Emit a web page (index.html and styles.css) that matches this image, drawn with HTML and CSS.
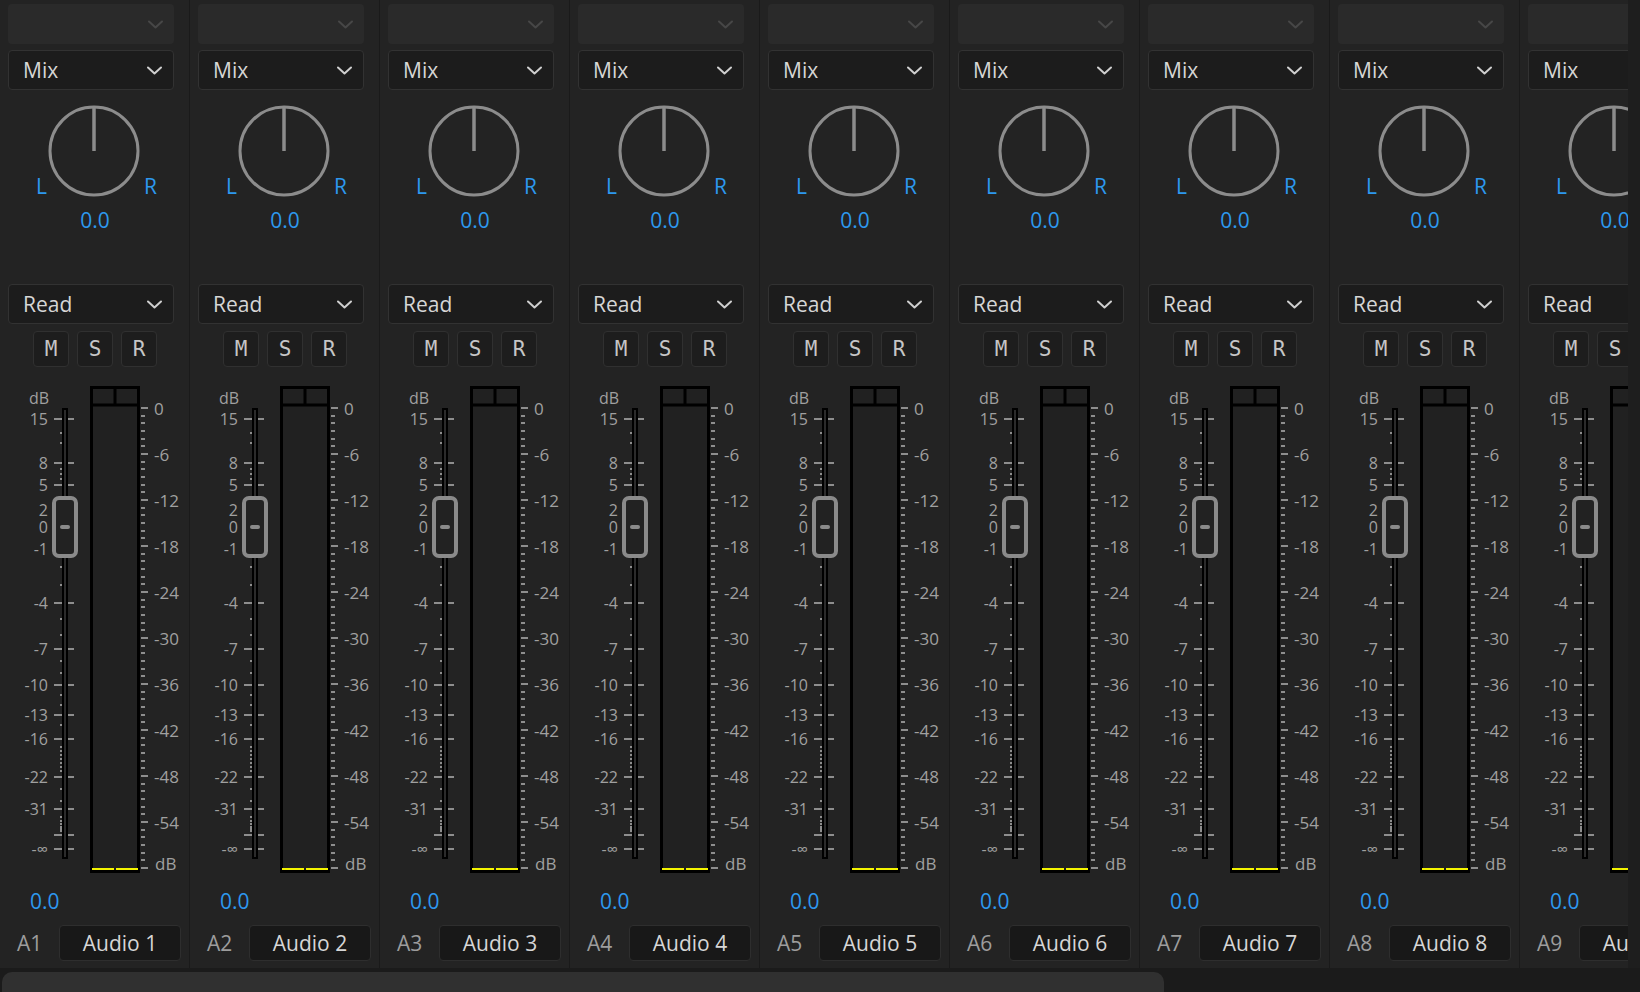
FILE: index.html
```html
<!DOCTYPE html>
<html lang="en">
<head>
<meta charset="utf-8">
<title>Audio Track Mixer</title>
<link rel="stylesheet" href="styles.css">
</head>
<body>
<div class="app">
  <div class="main">
    <div class="mixer" id="mixer"></div>
    <div class="side"></div>
  </div>
  <div class="hscroll"><div class="thumb"></div></div>
</div>
<script src="script.js"></script>
</body>
</html>
```

FILE: styles.css
```css
html, body {
  margin: 0;
  padding: 0;
  background: #232323;
}
body {
  width: 1640px;
  height: 992px;
  overflow: hidden;
  font-family: "Open Sans", "Noto Sans", sans-serif;
  font-weight: 500;
}
.app {
  display: flex;
  flex-direction: column;
  width: 1640px;
  height: 992px;
}
.main {
  display: flex;
  height: 968px;
}
.mixer {
  display: flex;
  width: 1628px;
  flex: 0 0 1628px;
  overflow: hidden;
  background: #232323;
}
.side {
  flex: 1;
  background: #1e1e1e;
}
.hscroll {
  height: 24px;
  box-sizing: border-box;
  padding: 4px 0 0 2px;
  background: #1b1b1b;
  overflow: hidden;
}
.thumb {
  width: 1162px;
  height: 30px;
  background: #303030;
  border-radius: 10px;
}
.ch {
  flex: 0 0 190px;
  width: 190px;
  box-sizing: border-box;
  border-right: 1px solid #1a1a1a;
  padding: 4px 15px 0 8px;
  display: flex;
  flex-direction: column;
}
.dd {
  height: 40px;
  flex: 0 0 40px;
  box-sizing: border-box;
  border-radius: 4px;
  display: flex;
  align-items: center;
  justify-content: space-between;
  padding: 0 11px 0 14px;
  font-size: 21px;
  color: #d6d6d6;
}
.dd svg {
  display: block;
}
.dd-off {
  background: #2a2a2a;
}
.dd-on {
  background: #1c1c1c;
  border: 1px solid #323232;
}
.dd-mix {
  margin-top: 6px;
}
.pan {
  height: 194px;
  flex: 0 0 194px;
}
.pan svg, .fader svg {
  display: block;
}
.lbl-blue {
  fill: #2d98ee;
  font-family: "Open Sans", sans-serif;
  font-weight: 500;
  font-size: 21px;
}
.msr {
  display: flex;
  gap: 8px;
  margin-top: 7px;
  padding-left: 25px;
  height: 36px;
}
.btn {
  width: 36px;
  height: 36px;
  box-sizing: border-box;
  border: 1px solid #303030;
  border-radius: 4px;
  background: #1d1d1d;
  color: #c6c6c6;
  font-family: "DejaVu Sans Mono", monospace;
  font-weight: 400;
  font-size: 21px;
  display: flex;
  align-items: center;
  justify-content: center;
}
.fader {
  margin-top: 13px;
  height: 500px;
  flex: 0 0 500px;
}
.scale-txt {
  fill: #a0a0a0;
  font-family: "Open Sans", sans-serif;
  font-weight: 500;
  font-size: 17px;
}
.scale-sm {
  font-size: 16px;
}
.vol {
  margin-top: 7px;
  height: 28px;
  line-height: 28px;
  padding-left: 22px;
  font-size: 21px;
  color: #2d98ee;
}
.name-row {
  margin-top: 10px;
  display: flex;
  align-items: center;
  height: 36px;
}
.trk {
  flex: 0 0 51px;
  width: 51px;
  box-sizing: border-box;
  padding-left: 9px;
  font-size: 21px;
  color: #9d9d9d;
}
.name {
  width: 122px;
  flex: 0 0 122px;
  height: 36px;
  box-sizing: border-box;
  border: 1px solid #2e2e2e;
  border-radius: 4px;
  background: #181818;
  color: #d6d6d6;
  font-size: 21px;
  display: flex;
  align-items: center;
  justify-content: center;
  white-space: nowrap;
}
```

FILE: script.js
```js
(function () {
  var mixer = document.getElementById('mixer');

  function chevron(color) {
    return '<svg width="15" height="9" viewBox="0 0 15 9"><path d="M1 1.5 L7.5 7.5 L14 1.5" fill="none" stroke="' + color + '" stroke-width="2" stroke-linecap="round" stroke-linejoin="round"/></svg>';
  }

  function panSvg() {
    return '<svg width="166" height="194" viewBox="0 0 166 194">' +
      '<circle cx="86" cy="61" r="44" fill="none" stroke="#8c8c8c" stroke-width="3"/>' +
      '<line x1="86" y1="16" x2="86" y2="61" stroke="#8c8c8c" stroke-width="3.5"/>' +
      '<text class="lbl-blue" x="28" y="104">L</text>' +
      '<text class="lbl-blue" x="136" y="104">R</text>' +
      '<text class="lbl-blue" x="87" y="138" text-anchor="middle">0.0</text>' +
      '</svg>';
  }

  var leftMajor = [
    ['15', 419], ['8', 463], ['5', 485], ['2', 510], ['0', 527], ['-1', 549],
    ['-4', 603], ['-7', 649], ['-10', 685], ['-13', 715], ['-16', 739],
    ['-22', 777], ['-31', 809], ['', 835], ['-\u221E', 849]
  ];
  var leftDots = [433, 443, 469, 474, 479, 567, 585, 619, 635, 661, 673, 695, 705, 725,
    747, 751, 755, 759, 763, 767, 771, 789, 801, 817, 821, 824, 827, 829, 831];

  function faderSvg() {
    var s = '<svg width="182" height="500" viewBox="0 0 182 500">';
    var oy = 380, ox = 8;
    s += '<text class="scale-txt scale-sm" x="' + (49 - ox) + '" y="' + (404 - oy) + '" text-anchor="end">dB</text>';
    leftMajor.forEach(function (m) {
      var y = m[1] - oy;
      s += '<rect x="' + (54 - ox) + '" y="' + (y - 1) + '" width="8" height="2" fill="#8e8e8e"/>';
      s += '<rect x="' + (68 - ox) + '" y="' + (y - 1) + '" width="6" height="2" fill="#8e8e8e"/>';
      if (m[0]) {
        s += '<text class="scale-txt scale-sm" x="' + (48 - ox) + '" y="' + (y + 6) + '" text-anchor="end">' + m[0] + '</text>';
      }
    });
    leftDots.forEach(function (d) {
      s += '<rect x="' + (60 - ox) + '" y="' + (d - oy - 1) + '" width="2" height="2" fill="#8e8e8e"/>';
    });
    s += '<rect x="' + (62 - ox) + '" y="' + (408 - oy) + '" width="6" height="451" fill="#000"/>';
    s += '<rect x="' + (64 - ox) + '" y="' + (410 - oy) + '" width="2" height="447" fill="#2b2b2b"/>';
    s += '<rect x="' + (54 - ox) + '" y="' + (498 - oy) + '" width="22" height="58" rx="5" ry="5" fill="#222" stroke="#8a8a8a" stroke-width="4"/>';
    s += '<rect x="' + (60 - ox) + '" y="' + (525 - oy) + '" width="10" height="4" rx="2" ry="2" fill="#8a8a8a"/>';
    s += '<rect x="' + (91.5 - ox) + '" y="' + (387.5 - oy) + '" width="47" height="484" fill="#212121" stroke="#000" stroke-width="3"/>';
    s += '<line x1="' + (90 - ox) + '" y1="' + (405 - oy) + '" x2="' + (140 - ox) + '" y2="' + (405 - oy) + '" stroke="#000" stroke-width="3"/>';
    s += '<line x1="' + (115 - ox) + '" y1="' + (386 - oy) + '" x2="' + (115 - ox) + '" y2="' + (405 - oy) + '" stroke="#000" stroke-width="3"/>';
    s += '<rect x="' + (92 - ox) + '" y="' + (868 - oy) + '" width="22" height="2" fill="#f4f400"/>';
    s += '<rect x="' + (116 - ox) + '" y="' + (868 - oy) + '" width="22" height="2" fill="#f4f400"/>';
    for (var d = 0; d <= 60; d++) {
      var y = Math.round(408 + d * 46 / 6) - oy;
      var major = d % 6 === 0;
      s += '<rect x="' + (141 - ox) + '" y="' + (y - 1) + '" width="' + (major ? 7 : 4) + '" height="2" fill="#8e8e8e"/>';
      if (major && d < 60) {
        s += '<text class="scale-txt" x="' + (154 - ox) + '" y="' + (y + 7) + '">' + (d === 0 ? '0' : '-' + d) + '</text>';
      }
    }
    s += '<text class="scale-txt" x="' + (155 - ox) + '" y="' + (870 - oy) + '">dB</text>';
    s += '</svg>';
    return s;
  }

  var html = '';
  for (var i = 1; i <= 9; i++) {
    html += '<div class="ch">' +
      '<div class="dd dd-off"><span></span>' + chevron('#474747') + '</div>' +
      '<div class="dd dd-on dd-mix"><span>Mix</span>' + chevron('#cfcfcf') + '</div>' +
      '<div class="pan">' + panSvg() + '</div>' +
      '<div class="dd dd-on"><span>Read</span>' + chevron('#cfcfcf') + '</div>' +
      '<div class="msr"><div class="btn">M</div><div class="btn">S</div><div class="btn">R</div></div>' +
      '<div class="fader">' + faderSvg() + '</div>' +
      '<div class="vol">0.0</div>' +
      '<div class="name-row"><div class="trk">A' + i + '</div><div class="name">Audio ' + i + '</div></div>' +
      '</div>';
  }
  mixer.innerHTML = html;
})();
```
